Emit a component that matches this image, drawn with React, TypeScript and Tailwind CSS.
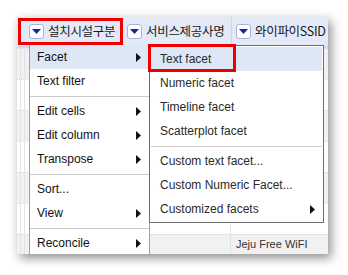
import React from "react";

const sans = { fontFamily: '"Liberation Sans", Arial, sans-serif' };
const kr = { fontFamily: '"Noto Sans CJK KR", "Liberation Sans", sans-serif' };

function DropButton() {
  return (
    <span className="flex h-[15px] w-[15px] shrink-0 items-center justify-center rounded-[3px] border border-[#a9b3db] bg-white">
      <svg width="9" height="5" viewBox="0 0 9 5">
        <path d="M0 0 H9 L4.5 5 Z" fill="#1b24a6" />
      </svg>
    </span>
  );
}

function Arrow() {
  return (
    <svg width="5" height="9" viewBox="0 0 5 9" className="shrink-0">
      <path d="M0 0 L5 4.5 L0 9 Z" fill="#111" />
    </svg>
  );
}

type Item = { label?: string; sub?: boolean; active?: boolean; sep?: boolean };

const mainItems: Item[] = [
  { label: "Facet", sub: true, active: true },
  { label: "Text filter" },
  { sep: true },
  { label: "Edit cells", sub: true },
  { label: "Edit column", sub: true },
  { label: "Transpose", sub: true },
  { sep: true },
  { label: "Sort..." },
  { label: "View", sub: true },
  { sep: true },
  { label: "Reconcile", sub: true },
];

const facetItems: Item[] = [
  { label: "Text facet", active: true },
  { label: "Numeric facet" },
  { label: "Timeline facet" },
  { label: "Scatterplot facet" },
  { sep: true },
  { label: "Custom text facet..." },
  { label: "Custom Numeric Facet..." },
  { label: "Customized facets", sub: true },
];

function MenuList({ items, pl, pr, color }: { items: Item[]; pl: string; pr: string; color: string }) {
  return (
    <>
      {items.map((it, i) =>
        it.sep ? (
          <div key={i} className="flex h-[6px] items-center">
            <div className="h-px w-full bg-[#cccccc]" />
          </div>
        ) : (
          <div
            key={i}
            className={`flex h-[24px] items-center justify-between ${pl} ${pr} text-[12px] ${color} ${
              it.active ? "bg-[#dde7f6]" : ""
            }`}
          >
            <span>{it.label}</span>
            {it.sub && <Arrow />}
          </div>
        )
      )}
    </>
  );
}

export default function App() {
  const rows = [0, 1, 2, 3, 4, 5, 6, 7];
  return (
    <div className="h-[275px] w-[348px] bg-white pl-[17px] pt-[17px]" style={sans}>
      <div className="relative h-[237px] w-[311px] overflow-hidden bg-white shadow-[3px_4px_10px_rgba(0,0,0,0.45)]">
        {/* header */}
        <div className="flex h-[29px] bg-[#e4e9f8] text-[12.5px] tracking-[-0.3px] text-[#1a1a1a]" style={kr}>
          <div className="w-[8px] shrink-0" />
          <div className="flex w-[98px] shrink-0 items-center gap-[4px] pl-[4px]">
            <DropButton />
            <span className="whitespace-nowrap">설치시설구분</span>
          </div>
          <div className="flex w-[108px] shrink-0 items-center gap-[4px] pl-[4px]">
            <DropButton />
            <span className="whitespace-nowrap">서비스제공사명</span>
          </div>
          <div className="flex min-w-0 flex-1 items-center gap-[4px] border-l border-[#cdd4ee] pl-[4px]">
            <DropButton />
            <span className="whitespace-nowrap">와이파이SSID</span>
          </div>
        </div>
        <div className="h-[2px] bg-[#cfd7f0]" />

        {/* body rows */}
        {rows.map((r) => (
          <div
            key={r}
            className={`flex h-[31px] border-t border-dotted border-[#d6d6d6] ${
              r % 2 === 0 ? "bg-[#f1f1f1]" : "bg-white"
            }`}
          >
            <div className="w-[4px] shrink-0 border-r border-[#e2e2e2]" />
            <div className="w-[4px] shrink-0 border-r border-[#e2e2e2]" />
            <div className="w-[98px] shrink-0 border-r border-[#e2e2e2]" />
            <div className="w-[108px] shrink-0 border-r border-[#e2e2e2]" />
            <div className="flex-1 pl-[5px] pt-[1px] text-[11px] text-[#333]">
              {r === 6 ? "Jeju Free WiFI" : ""}
            </div>
          </div>
        ))}

        {/* highlight box on first column header */}
        <div className="absolute left-[1px] top-[1px] h-[27px] w-[105px] border-[3px] border-[#ee0000]" />

        {/* main menu */}
        <div className="absolute left-[12px] top-[28px] h-[220px] w-[121px] border-l border-r border-[#a0a0a0] bg-white">
          <MenuList items={mainItems} pl="pl-[7px]" pr="pr-[8px]" color="text-[#111]" />
        </div>

        {/* facet submenu */}
        <div className="absolute left-[132px] top-[28px] w-[175px] border border-[#6e6e6e] bg-white p-px">
          <MenuList items={facetItems} pl="pl-[9px]" pr="pr-[7px]" color="text-[#2a2a2a]" />
        </div>

        {/* highlight box on Text facet */}
        <div className="absolute left-[131px] top-[27px] h-[28px] w-[88px] border-[3px] border-[#ee0000]" />
      </div>
    </div>
  );
}
